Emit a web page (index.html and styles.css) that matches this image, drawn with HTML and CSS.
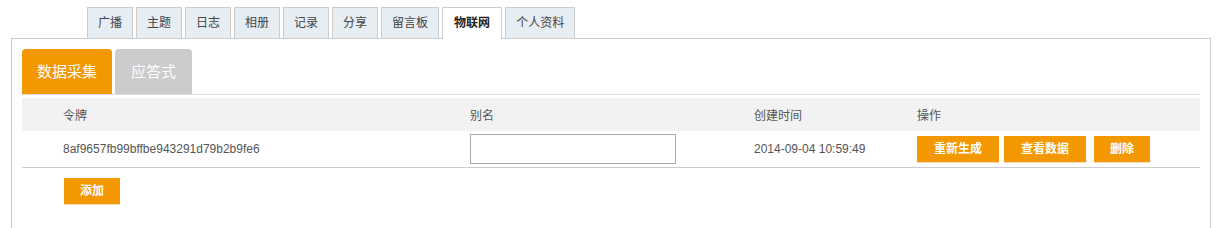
FILE: index.html
```html
<!DOCTYPE html>
<html lang="zh">
<head>
    <meta charset="UTF-8">
    <title>物联网</title>
    <link rel="stylesheet" href="styles.css">
</head>
<body>
<div class="page">
    <ul class="main-nav">
        <li><a href="#">广播</a></li>
        <li><a href="#">主题</a></li>
        <li><a href="#">日志</a></li>
        <li><a href="#">相册</a></li>
        <li><a href="#">记录</a></li>
        <li><a href="#">分享</a></li>
        <li><a href="#">留言板</a></li>
        <li class="active"><a href="#">物联网</a></li>
        <li><a href="#">个人资料</a></li>
    </ul>
    <div class="panel">
        <ul class="sub-nav">
            <li class="active"><a href="#">数据采集</a></li>
            <li><a href="#">应答式</a></li>
        </ul>
        <table class="token-table">
            <colgroup>
                <col class="col-token">
                <col class="col-alias">
                <col class="col-time">
                <col>
            </colgroup>
            <thead>
            <tr>
                <th>令牌</th>
                <th>别名</th>
                <th>创建时间</th>
                <th>操作</th>
            </tr>
            </thead>
            <tbody>
            <tr>
                <td>8af9657fb99bffbe943291d79b2b9fe6</td>
                <td><input type="text" class="alias-input"></td>
                <td>2014-09-04 10:59:49</td>
                <td>
                    <a href="#" class="btn btn-wide">重新生成</a><a href="#" class="btn btn-wide">查看数据</a><a href="#" class="btn btn-last">删除</a>
                </td>
            </tr>
            </tbody>
        </table>
        <div class="actions">
            <a href="#" class="btn">添加</a>
        </div>
    </div>
</div>
</body>
</html>
```

FILE: styles.css
```css
body {
    margin: 0;
    padding: 0;
    font-family: "Liberation Sans", "Noto Sans CJK SC", sans-serif;
    font-size: 12px;
    color: #555;
    background-color: #fff;
}
a {
    text-decoration: none;
}
.page {
    width: 1200px;
    margin: 7px 0 0 11px;
}

/* Hauptnavigation */
.main-nav {
    list-style: none;
    margin: 0 0 0 76px;
    padding: 0;
    display: flex;
    height: 31px;
    position: relative;
    z-index: 1;
}
.main-nav li {
    margin-right: 3px;
}
.main-nav a {
    display: block;
    height: 30px;
    line-height: 30px;
    padding: 0 10px;
    border: 1px solid #ccc;
    border-bottom: none;
    background-color: #e6edf3;
    color: #444;
}
.main-nav .active a {
    height: 31px;
    padding: 0 11px;
    background-color: #fff;
    color: #222;
    font-weight: bold;
}

.panel {
    border: 1px solid #ccc;
    border-bottom: none;
    padding: 10px 10px 24px 10px;
    min-height: 160px;
}

/* Unternavigation */
.sub-nav {
    list-style: none;
    margin: 0;
    padding: 0;
    display: flex;
    border-bottom: 1px solid #ddd;
}
.sub-nav li {
    margin-right: 3px;
}
.sub-nav a {
    display: block;
    box-sizing: border-box;
    min-width: 77px;
    height: 45px;
    line-height: 45px;
    padding: 0 15px;
    text-align: center;
    font-size: 15px;
    color: #fff;
    background-color: #ccc;
    border-radius: 4px 4px 0 0;
}
.sub-nav .active a {
    min-width: 90px;
    background-color: #f39800;
}

/* Tabelle */
.token-table {
    width: 100%;
    margin-top: 3px;
    border-collapse: collapse;
    table-layout: fixed;
}
.col-token {
    width: 407px;
}
.col-alias {
    width: 284px;
}
.col-time {
    width: 163px;
}
.token-table th {
    height: 33px;
    padding: 0 0 0 41px;
    text-align: left;
    font-weight: normal;
    background-color: #f2f2f2;
    color: #555;
}
.token-table td {
    height: 36px;
    padding: 0 0 0 41px;
    border-bottom: 1px solid #ccc;
}
.alias-input {
    display: block;
    width: 206px;
    height: 30px;
    box-sizing: border-box;
    border: 1px solid #aaa;
    margin: 0;
}

.btn {
    display: inline-block;
    height: 26px;
    line-height: 26px;
    padding: 0 16px;
    background-color: #f39800;
    color: #fff;
    font-weight: bold;
    box-shadow: 0 1px 0 #f8dcae;
    margin-right: 5px;
}
.btn-wide {
    padding: 0 17px;
}
.btn-last {
    margin-left: 3px;
}
.actions {
    padding: 10px 0 0 42px;
}
```
